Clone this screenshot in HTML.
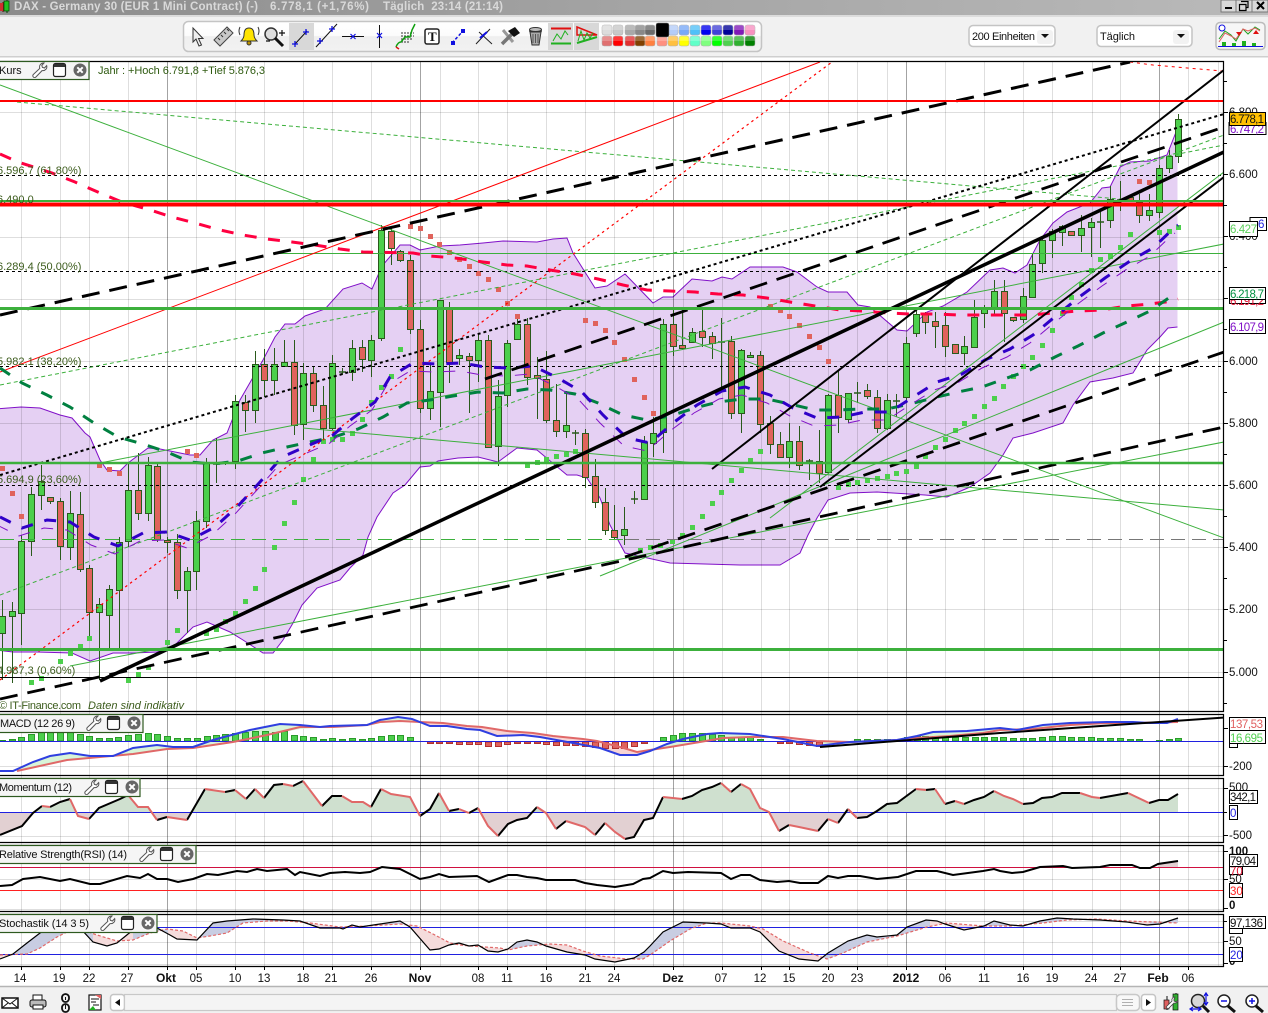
<!DOCTYPE html>
<html>
<head>
<meta charset="utf-8">
<title>DAX - Germany 30</title>
<style>
html,body{margin:0;padding:0;background:#fff;}
body{width:1268px;height:1013px;overflow:hidden;}
svg{display:block;font-family:"Liberation Sans",sans-serif;}
</style>
</head>
<body>
<svg width="1268" height="1013" viewBox="0 0 1268 1013" xmlns="http://www.w3.org/2000/svg">
<defs>
<linearGradient id="tb" x1="0" x2="1" y1="0" y2="0"><stop offset="0" stop-color="#8b8b8b"/><stop offset=".5" stop-color="#a4a4a4"/><stop offset="1" stop-color="#bababa"/></linearGradient>
<linearGradient id="pan" x1="0" x2="0" y1="0" y2="1"><stop offset="0" stop-color="#fff"/><stop offset=".47" stop-color="#fcfcfc"/><stop offset=".5" stop-color="#efefef"/><stop offset="1" stop-color="#f2f2f2"/></linearGradient>
<clipPath id="cm"><rect x="0" y="62" width="1223" height="649"/></clipPath>
<clipPath id="cb"><rect x="-5" y="62" width="1182.5" height="649"/></clipPath>
<clipPath id="cma"><rect x="0" y="715" width="1223" height="60"/></clipPath>
<clipPath id="cmo"><rect x="0" y="779" width="1223" height="63"/></clipPath>
<clipPath id="crs"><rect x="0" y="846" width="1223" height="65"/></clipPath>
<clipPath id="cst"><rect x="0" y="915" width="1223" height="51"/></clipPath>
<clipPath id="above"><rect x="0" y="770" width="1223" height="42"/></clipPath>
<clipPath id="below"><rect x="0" y="812" width="1223" height="30"/></clipPath>
<clipPath id="stb"><rect x="13" y="915" width="80" height="50"/><rect x="133" y="915" width="35" height="50"/><rect x="197" y="915" width="108" height="50"/><rect x="340" y="915" width="65" height="50"/><rect x="512" y="915" width="33" height="50"/><rect x="636" y="915" width="86" height="50"/><rect x="820" y="915" width="110" height="50"/><rect x="985" y="915" width="115" height="50"/><rect x="1150" y="915" width="30" height="50"/></clipPath>
<clipPath id="map"><rect x="415" y="715" width="237" height="50"/><rect x="755" y="715" width="65" height="50"/></clipPath>
<path id="bluema" d="M0 517L22 528 47 520 70 522 94 537 118 546 143 533 167 532 190 540 215 527 238 506 260 482 282 457 305 447 333 435 353 418 375 402 390 377 413 363 437 364 462 363 485 367 510 368 533 366 558 378 582 392 603 415 627 438 650 443 673 423 697 405 722 391 745 387 770 395 793 408 817 418 842 417 865 412 890 412 913 397 937 382 962 374 985 360 1010 349 1033 335 1057 315 1082 295 1105 278 1130 261 1153 248 1175 227 1178 225"/>
<path id="stp" d="M0 959L13 954 27 943 40 933 50 928 80 928 93 942 107 946 117 943 133 930 157 928 170 935 177 939 197 940 213 923 227 921 253 919 283 920 300 921 320 928 340 928 343 929 352 925 360 927 380 924 400 921 410 927 430 950 439 949 449 945 459 943 469 946 478 945 488 951 498 952 508 949 517 942 527 940 537 942 546 946 567 952 585 955 595 959 615 962 634 958 644 952 650 946 663 932 683 922 707 923 721 924 731 928 750 928 760 932 779 951 799 959 818 961 828 953 848 941 867 935 877 937 897 935 907 927 926 920 937 921 945 924 964 930 984 926 994 921 1010 925 1023 926 1040 921 1057 918 1073 919 1100 920 1127 922 1147 925 1160 924 1178 918 L1178 923 1153 922 1127 921 1097 919 1067 920 1043 923 1010 926 983 926 947 923 927 927 897 936 867 942 843 953 827 959 810 953 783 941 763 929 750 926 721 923 707 923 690 929 670 941 650 955 643 959 627 959 600 956 583 951 567 945 550 944 527 946 508 950 500 948 470 946 460 945 450 943 433 934 417 926 400 924 367 926 340 927 310 923 300 922 287 921 267 921 243 923 227 933 210 936 197 938 183 931 167 929 150 933 133 940 117 941 97 935 80 929 67 932 57 937 40 948 27 954 0 955z"/>
<path id="map2" d="M0 771L13 771 33 762 50 756 70 753 90 756 113 756 133 748 157 745 173 747 193 747 213 740 250 730 280 724 300 725 320 727 330 726 367 725 380 720 398 717 412 719 430 726 447 726 467 729 480 730 497 736 523 735 540 737 573 743 600 748 620 755 637 755 650 751 667 744 683 739 707 734 720 733 750 734 783 739 817 746 850 742 897 740 917 736 933 732 967 731 1000 728 1017 730 1043 725 1070 723 1107 722 1133 722 1150 723 1167 723 1178 719 L1178 722 1133 723 1107 723 1070 725 1033 729 1000 730 983 733 950 736 917 738 897 740 850 742 817 741 783 737 750 737 723 738 700 742 670 747 650 750 637 752 620 747 597 741 583 739 553 736 533 733 507 731 482 727 467 726 443 723 420 722 400 721 380 722 367 725 333 727 300 729 267 735 233 742 193 748 167 749 133 754 100 757 67 760 17 771z"/>
<path id="moa" d="M0 812L0 835 22 826 33 813 42 806 50 807 60 802 70 799 78 816 89 819 99 808 120 799 128 795 138 807 148 807 157 820 167 817 187 820 205 789 225 792 235 790 246 799 255 789 264 798 274 785 283 784 293 786 303 781 322 806 332 796 342 796 352 802 363 802 371 807 381 789 391 794 410 797 420 816 430 809 439 793 449 811 459 809 469 813 478 808 488 826 498 836 508 824 517 820 527 818 537 807 546 813 556 829 566 821 585 827 595 835 605 823 615 832 625 839 634 837 644 820 653 818 663 797 673 798 682 799 692 796 702 790 712 787 721 783 731 792 741 784 750 789 760 808 769 812 779 831 789 825 799 827 818 831 828 819 838 823 848 809 857 818 867 817 877 811 887 804 897 803 916 789 926 790 935 789 945 804 955 801 964 804 974 800 984 797 994 791 1004 796 1013 799 1023 804 1033 803 1042 798 1052 797 1062 793 1080 793 1092 797 1100 798 1128 793 1149 803 1159 800 1168 800 1178 794 1178 812z"/>
<g id="ic">
<path d="M14 1.500a4 4 0 0 0-4.200 5.300L3.300 13a1.800 1.800 0 0 0 2.600 2.500l6.200-6.400a4 4 0 0 0 4.600-5l-2.300 2.400-2-.6-.6-2 2.200-2.400z" transform="translate(-10,-8.500)" fill="#fff" stroke="#555" stroke-width="1"/>
<rect x="13.500" y="-6.500" width="12" height="13" rx="2" fill="#fff" stroke="#222" stroke-width="1.200"/>
<rect x="14" y="-6" width="11" height="3" fill="#333"/>
<circle cx="40" cy="0" r="6.500" fill="#666"/>
<path d="M37.300-2.700l5.400 5.400M42.700-2.700l-5.400 5.400" stroke="#fff" stroke-width="2"/>
</g>
</defs>

<rect width="1268" height="1013" fill="#fff"/>
<!-- title bar -->
<rect x="0" y="0" width="1268" height="15" fill="url(#tb)"/>
<path d="M3 2V12" stroke="#600" stroke-width="1"/><rect x="0" y="3" width="3" height="8" fill="#d03030"/>
<path d="M7 0V13" stroke="#040" stroke-width="1"/><rect x="4" y="1" width="5" height="10" fill="#20c020" stroke="#040" stroke-width=".7"/>
<g font-weight="bold" font-size="11.500" fill="#d9d9d9">
<text x="14" y="10" textLength="244" lengthAdjust="spacing">DAX - Germany 30 (EUR 1 Mini Contract) (-)</text>
<text x="270" y="10" textLength="99" lengthAdjust="spacing">6.778,1 (+1,76%)</text>
<text x="383" y="10" textLength="120" lengthAdjust="spacing" xml:space="preserve">Täglich  23:14 (21:14)</text>
</g>
<rect x="1221" y="0" width="15" height="12" fill="#d8d8d8" stroke="#777"/><rect x="1225" y="7" width="7" height="2" fill="#000"/>
<rect x="1236" y="0" width="16" height="12" fill="#d8d8d8" stroke="#777"/><path d="M1241 1.500h7v6h-2M1239.500 4.500h6.500v6h-6.500z" fill="none" stroke="#000" stroke-width="1.200"/>
<rect x="1252" y="0" width="16" height="12" fill="#d8d8d8" stroke="#777"/><path d="M1257 2l7 7M1264 2l-7 7" stroke="#000" stroke-width="2"/>

<!-- toolbar -->
<rect x="0" y="15" width="1268" height="46" fill="#f1f1f1"/>
<rect x="0" y="15" width="1268" height="2" fill="#dcdcdc"/>
<rect x="0" y="56" width="1268" height="1.500" fill="#cfcfcf"/>
<rect x="0" y="57.500" width="1268" height="3.500" fill="#fff"/>
<rect x="183.500" y="21.500" width="578" height="30" rx="5" fill="url(#pan)" stroke="#c4c4c4" stroke-width="1.500"/>
<rect x="289" y="23" width="25" height="27" fill="#d8d8d8"/>
<rect x="548" y="23" width="25" height="27" fill="#d8d8d8"/>
<rect x="574" y="23" width="25" height="27" fill="#d8d8d8"/>
<path d="M193 28v14l3-3 3 7 2.500-1-3-6.500h4.500z" fill="#eee" stroke="#333"/>
<path d="M214 40l13-13 6 6-13 13z" fill="#c8c8c8" stroke="#444"/><path d="M218 38l2 2M221 35l2 2M224 32l2 2M227 29l2 2" stroke="#333"/>
<path d="M249 28c-4 0-5 3-5 7 0 3-2 5-3 6h16c-1-1-3-3-3-6 0-4-1-7-5-7z" fill="#ffe400" stroke="#333"/><circle cx="249" cy="43" r="2" fill="#bb9000" stroke="#333"/>
<path d="M240 27q-2 4 0 8M258 27q2 4 0 8" fill="none" stroke="#333"/>
<circle cx="271" cy="34" r="6" fill="#ddd" stroke="#333" stroke-width="1.500"/><path d="M275 38l8 8" stroke="#111" stroke-width="3"/>
<path d="M279 33h6M282 30v6M266 41h4" stroke="#111" stroke-width="1.200"/>
<path d="M295 44l12-13" stroke="#111"/><path d="M295 41v6M292 44h6M306 29v6M303 32h6" stroke="#1010e0" stroke-width="1.300"/>
<path d="M316 47l21-23" stroke="#111"/><path d="M320 38v6M317 41h6M332 26v6M329 29h6" stroke="#1010e0" stroke-width="1.300"/>
<path d="M342 36.500h22" stroke="#111"/><path d="M350.500 34l5 5M355.500 34l-5 5" stroke="#1010e0" stroke-width="1.200"/>
<path d="M379.500 25v23" stroke="#111"/><path d="M377 33l5 5M382 33l-5 5" stroke="#1010e0" stroke-width="1.200"/>
<path d="M401 33h13M401 36h13M401 39h11M401 42h8" stroke="#333" stroke-dasharray="2 1"/><path d="M396 47q2-5 5-5l4-5h5l2-7 3-6" fill="none" stroke="#10a010" stroke-width="1.500"/><path d="M396 47l3 2" stroke="#e01010" stroke-width="1.500"/>
<rect x="425" y="29" width="14" height="15" rx="2" fill="#fff" stroke="#222" stroke-width="1.500"/><text x="428" y="41" font-size="13" font-weight="bold" font-family="Liberation Serif,serif" fill="#111">T</text>
<path d="M452 43l11-12" stroke="#1010e0" stroke-width="1.500" stroke-dasharray="3 2"/><rect x="451" y="41" width="4" height="4" fill="#1010e0"/><rect x="461" y="29" width="4" height="4" fill="#1010e0"/>
<path d="M476 44l14-15M479 32l13 12" stroke="#222"/><path d="M480 38l7-6" stroke="#1010e0" stroke-width="2"/>
<path d="M503 30l10 12" stroke="#999" stroke-width="3"/><path d="M502 44l10-10" stroke="#777" stroke-width="3.500"/><path d="M508 31l7-4 5 6-6 4z" fill="#111"/>
<path d="M529 31h13M530 32l2 13h7l2-13z" fill="#aaa" stroke="#333"/><ellipse cx="535.500" cy="29.500" rx="6" ry="2" fill="#bbb" stroke="#333"/><path d="M533 34v9M535.500 34v9M538 34v9" stroke="#555"/>
<path d="M551 28.500h20" stroke="#e01010" stroke-width="2"/><path d="M551 43.500h20" stroke="#20b020" stroke-width="2"/><path d="M553 41l4-7 4 5 4-8 3 4" fill="none" stroke="#20b020"/>
<path d="M577 27l20 8-20 0z" fill="none" stroke="#e01010" stroke-width="1.500"/><path d="M577 43l20-6" stroke="#20b020" stroke-width="2"/><path d="M578 41l3-10 3 9 3-7 3 5 3-5" fill="none" stroke="#20b020"/>

<!-- palette -->
<g stroke="#b0b0b0" stroke-width=".5">
<rect x="602" y="25" width="10" height="10" rx="2" fill="#dcdcdc"/><rect x="613" y="25" width="10" height="10" rx="2" fill="#c8c8c8"/><rect x="625" y="25" width="10" height="10" rx="2" fill="#a8a8a8"/><rect x="635" y="25" width="10" height="10" rx="2" fill="#888"/><rect x="645" y="25" width="10" height="10" rx="2" fill="#6a6a6a"/>
<rect x="668" y="25" width="10" height="10" rx="2" fill="#b4ccf8"/><rect x="679" y="25" width="10" height="10" rx="2" fill="#78a8f8"/><rect x="690" y="25" width="10" height="10" rx="2" fill="#50c0f8"/><rect x="701" y="25" width="10" height="10" rx="2" fill="#0000f0"/><rect x="712" y="25" width="10" height="10" rx="2" fill="#4040d8"/><rect x="723" y="25" width="10" height="10" rx="2" fill="#000098"/><rect x="734" y="25" width="10" height="10" rx="2" fill="#8018b8"/><rect x="745" y="25" width="10" height="10" rx="2" fill="#f890c0"/>
<rect x="602" y="36" width="10" height="10" rx="2" fill="#e07070"/><rect x="613" y="36" width="10" height="10" rx="2" fill="#ff0000"/><rect x="625" y="36" width="10" height="10" rx="2" fill="#e03030"/><rect x="635" y="36" width="10" height="10" rx="2" fill="#804000"/><rect x="645" y="36" width="10" height="10" rx="2" fill="#ff8040"/><rect x="657" y="36" width="10" height="10" rx="2" fill="#ff9080"/><rect x="668" y="36" width="10" height="10" rx="2" fill="#ffc040"/><rect x="679" y="36" width="10" height="10" rx="2" fill="#ffff00"/><rect x="690" y="36" width="10" height="10" rx="2" fill="#60ffc8"/><rect x="701" y="36" width="10" height="10" rx="2" fill="#80ff80"/><rect x="712" y="36" width="10" height="10" rx="2" fill="#00ff00"/><rect x="723" y="36" width="10" height="10" rx="2" fill="#50d050"/><rect x="734" y="36" width="10" height="10" rx="2" fill="#30b030"/><rect x="745" y="36" width="10" height="10" rx="2" fill="#008000"/>
</g>
<rect x="602" y="25" width="153" height="5" fill="#fff" opacity=".22"/><rect x="602" y="36" width="153" height="5" fill="#fff" opacity=".22"/>
<rect x="656" y="23" width="13" height="14" rx="2" fill="#000" stroke="#888" stroke-width=".5"/>

<!-- selects -->
<rect x="969" y="25.500" width="86" height="21" rx="4" fill="#fff" stroke="#c4c4c4" stroke-width="1.500"/>
<rect x="1037" y="30" width="16" height="14" rx="3" fill="#f2f2f2"/>
<text x="972" y="40" font-size="11" fill="#111" textLength="63" lengthAdjust="spacing">200 Einheiten</text><path d="M1041 34h8l-4 4z" fill="#111"/>
<rect x="1097" y="25.500" width="95" height="21" rx="4" fill="#fff" stroke="#c4c4c4" stroke-width="1.500"/>
<rect x="1173" y="30" width="16" height="14" rx="3" fill="#f2f2f2"/>
<text x="1100" y="40" font-size="11" fill="#111" textLength="35" lengthAdjust="spacing">Täglich</text><path d="M1177 34h8l-4 4z" fill="#111"/>
<rect x="1216" y="22.500" width="49" height="27" rx="4" fill="#f6f6f6" stroke="#bbb" stroke-width="1.500"/>
<path d="M1219 39l6-8 6 4 5 6 7-12 5 5 7-7 5 3" fill="none" stroke="#20a020"/><path d="M1219 42l6-9 6 3 5 3 7-10 5 2 7-3 5 3" fill="none" stroke="#e06060"/>
<path d="M1218 46.500h45" stroke="#1010e0"/><path d="M1222 42h4v4h-4zM1232 43h4v3h-4zM1242 41h4v5h-4zM1252 43h4v3h-4z" fill="#20b020"/>
<circle cx="1222" cy="28" r="3" fill="#fff" stroke="#1010e0"/><path d="M1236 32l3 4 3-4zM1256 30l-3 4h6z" fill="#e01010"/>

<!-- MAIN CHART -->
<g clip-path="url(#cb)"><path d="M-5 409L21 407 40 408 60 415 72 418 85 433 90 437 100 460 107 470 120 471 128 463 148 448 160 449 190 455 200 455 213 440 227 433 240 400 263 360 275 337 285 324 295 324 305 316 325 309 343 289 362 283 372 289 382 266 400 245 410 245 420 250 440 246 460 245 483 243 503 241 537 242 553 239 567 238 573 253 595 288 607 286 625 274 653 303 663 297 673 297 692 279 712 281 722 277 732 279 750 267 783 267 797 272 817 287 828 292 847 292 858 305 870 307 897 330 907 331 927 312 943 306 967 292 990 270 1003 268 1015 273 1027 265 1040 240 1053 223 1067 212 1090 203 1102 188 1110 187 1120 167 1130 162 1150 161 1167 155 1178 127 1180 127 1180 327 1178 327 1168 328 1160 337 1147 350 1133 373 1113 378 1090 382 1073 405 1063 423 1033 433 1013 438 1003 455 990 473 970 487 947 497 925 495 877 492 850 493 828 500 817 518 808 535 800 553 780 565 740 565 670 563 625 553 610 525 600 498 587 478 577 475 567 475 537 450 517 448 498 462 478 457 458 458 438 461 430 466 420 467 405 485 393 493 377 517 368 537 363 555 350 568 340 580 317 588 302 605 293 623 283 640 273 653 263 653 243 640 230 632 207 622 193 627 180 640 172 648 157 652 133 653 113 653 90 661 72 653 37 652 13 652 -5 650z" fill="#e5d0f3" stroke="#8010c8" stroke-width="1"/></g>

<!-- grids -->
<g stroke="#000" stroke-opacity=".13" stroke-width="1" fill="none">
<path id="vg" d="M21.500 62V966M60.500 62V966M89.500 62V966M128.500 62V966M196.500 62V966M235.500 62V966M264.500 62V966M303.500 62V966M332.500 62V966M371.500 62V966M410.500 62V966M440.500 62V966M478.500 62V966M507.500 62V966M546.500 62V966M585.500 62V966M614.500 62V966M653.500 62V966M683.500 62V966M722.500 62V966M761.500 62V966M789.500 62V966M828.500 62V966M857.500 62V966M887.500 62V966M945.500 62V966M984.500 62V966M1023.500 62V966M1052.500 62V966M1092.500 62V966M1120.500 62V966M1188.500 62V966M1218.500 62V966"/>
<path d="M0 112.500H1223M0 237.500H1223M0 299.500H1223M0 361.500H1223M0 423.500H1223M0 547.500H1223M0 609.500H1223M0 672.500H1223M0 766.500H1223M0 788.500H1223M0 836.500H1223M0 851.500H1223M0 879.500H1223M0 909.500H1223M0 921.500H1223M0 942.500H1223M0 964.500H1223"/>
</g>
<path d="M167.500 62V966M420.500 62V966M673.500 62V966M906.500 62V966M1159.500 62V966" stroke="#000" stroke-opacity=".36" fill="none"/>

<g clip-path="url(#cm)">
<!-- wicks -->
<path fill="none" stroke="#2a5a1c" stroke-width="1" d="M2.500 600V680M12.500 602V683M21.500 535V645M31.500 487V556M41.500 465V510M50.500 497V504M60.500 498V560M70.500 491V560M80.500 492V572M89.500 565V640M99.500 598V680M109.500 585V650M119.500 537V650M128.500 463V547M138.500 453V520M148.500 457V521M157.500 463V542M167.500 537V553M177.500 534V599M187.500 567V633M196.500 511V590M206.500 458V528M216.500 438V483M225.500 463V465M235.500 395V469M245.500 395V432M255.500 351V423M264.500 349V397M274.500 348V395M284.500 340V367M294.500 340V435M303.500 363V440M313.500 367V412M323.500 386V440M332.500 355V430M342.500 368V375M352.500 340V381M362.500 340V372M371.500 335V377M381.500 225V341M391.500 228V265M400.500 250V262M410.500 255V334M420.500 320V413M430.500 363V420M440.500 300V427M449.500 302V383M459.500 349V365M469.500 353V413M478.500 335V382M488.500 335V448M498.500 380V466M507.500 340V407M517.500 318V340M527.500 318V385M537.500 357V419M546.500 351V423M556.500 384V437M566.500 391V438M575.500 430V445M585.500 429V488M595.500 459V508M605.500 488V535M614.500 505V540M624.500 507V545M634.500 491V504M644.500 436V500M653.500 417V457M663.500 319V453M673.500 310V356M682.500 310V350M692.500 328V342M702.500 308V347M712.500 332V359M721.500 318V387M731.500 336V419M741.500 349V433M750.500 352V358M760.500 351V433M770.500 416V454M780.500 432V458M789.500 423V468M799.500 426V470M809.500 459V480M819.500 430V483M828.500 394V472M838.500 371V433M848.500 393V423M857.500 382V403M867.500 384V399M877.500 390V433M887.500 394V430M896.500 394V417M906.500 337V403M916.500 309V337M925.500 312V334M935.500 312V348M945.500 312V357M955.500 344V354M964.500 336V365M974.500 300V348M984.500 305V328M994.500 280V315M1004.500 280V342M1013.500 317V322M1023.500 288V323M1032.500 254V298M1042.500 237V273M1052.500 229V258M1062.500 225V246M1071.500 231V235M1081.500 215V252M1091.500 218V257M1100.500 212V248M1110.500 186V228M1120.500 181V211M1130.500 197V200M1139.500 194V223M1149.500 194V221M1159.500 165V218M1169.500 150V173M1178.500 114V163"/>
<!-- doji -->
<path fill="none" stroke="#2a5a1c" stroke-width="1.500" d="M213 464h7M222 463h7M339 372h7M572 433h7M631 499h7M718 342h7M806 461h7M854 393h7M893 401h7M1097 222h7M1117 200h7"/>
<!-- green bodies -->
<path fill="#4ccf4c" stroke="#2a5a1c" stroke-width="1" d="M-.5 616.500h6V633.500h-6zM9.500 611.500h6V616.500h-6zM18.500 541.500h6V613.500h-6zM28.500 494.500h6V541.500h-6zM38.500 481.500h6V495.500h-6zM67.500 513.500h6V547.500h-6zM96.500 604.500h6V612.500h-6zM106.500 589.500h6V615.500h-6zM116.500 542.500h6V590.500h-6zM125.500 490.500h6V541.500h-6zM145.500 465.500h6V513.500h-6zM184.500 571.500h6V590.500h-6zM193.500 521.500h6V571.500h-6zM203.500 463.500h6V521.500h-6zM232.500 401.500h6V461.500h-6zM252.500 364.500h6V410.500h-6zM271.500 364.500h6V380.500h-6zM281.500 362.500h6V366.500h-6zM300.500 373.500h6V424.500h-6zM329.500 363.500h6V428.500h-6zM349.500 348.500h6V372.500h-6zM368.500 340.500h6V360.500h-6zM378.500 230.500h6V338.500h-6zM427.500 391.500h6V408.500h-6zM437.500 300.500h6V392.500h-6zM456.500 355.500h6V358.500h-6zM475.500 340.500h6V360.500h-6zM495.500 396.500h6V446.500h-6zM504.500 343.500h6V395.500h-6zM514.500 324.500h6V339.500h-6zM563.500 425.500h6V431.500h-6zM621.500 529.500h6V535.500h-6zM641.500 442.500h6V499.500h-6zM650.500 433.500h6V443.500h-6zM660.500 324.500h6V432.500h-6zM689.500 332.500h6V342.500h-6zM738.500 350.500h6V413.500h-6zM747.500 355.500h6V357.500h-6zM786.500 441.500h6V457.500h-6zM825.500 395.500h6V472.500h-6zM845.500 393.500h6V419.500h-6zM884.500 400.500h6V428.500h-6zM903.500 343.500h6V397.500h-6zM913.500 314.500h6V333.500h-6zM961.500 346.500h6V353.500h-6zM971.500 317.500h6V347.500h-6zM981.500 307.500h6V313.500h-6zM991.500 291.500h6V307.500h-6zM1020.500 296.500h6V319.500h-6zM1029.500 264.500h6V297.500h-6zM1039.500 240.500h6V263.500h-6zM1049.500 231.500h6V240.500h-6zM1059.500 226.500h6V232.500h-6zM1078.500 228.500h6V235.500h-6zM1088.500 222.500h6V227.500h-6zM1107.500 199.500h6V220.500h-6zM1146.500 210.500h6V215.500h-6zM1156.500 168.500h6V212.500h-6zM1166.500 156.500h6V168.500h-6zM1175.500 119.500h6V156.500h-6z"/>
<!-- red bodies -->
<path fill="#e0635c" stroke="#2a5a1c" stroke-width="1" d="M47.500 497.500h6V501.500h-6zM57.500 501.500h6V546.500h-6zM77.500 514.500h6V569.500h-6zM86.500 568.500h6V612.500h-6zM135.500 490.500h6V513.500h-6zM154.500 466.500h6V539.500h-6zM164.500 540.500h6V542.500h-6zM174.500 542.500h6V590.500h-6zM242.500 402.500h6V410.500h-6zM261.500 364.500h6V380.500h-6zM291.500 362.500h6V425.500h-6zM310.500 373.500h6V405.500h-6zM320.500 405.500h6V428.500h-6zM359.500 347.500h6V359.500h-6zM388.500 231.500h6V248.500h-6zM397.500 251.500h6V260.500h-6zM407.500 260.500h6V329.500h-6zM417.500 329.500h6V408.500h-6zM446.500 308.500h6V362.500h-6zM466.500 356.500h6V360.500h-6zM485.500 340.500h6V447.500h-6zM524.500 324.500h6V377.500h-6zM534.500 375.500h6V378.500h-6zM543.500 379.500h6V420.500h-6zM553.500 420.500h6V431.500h-6zM582.500 433.500h6V477.500h-6zM592.500 476.500h6V502.500h-6zM602.500 502.500h6V530.500h-6zM611.500 530.500h6V537.500h-6zM670.500 324.500h6V346.500h-6zM679.500 345.500h6V348.500h-6zM699.500 331.500h6V337.500h-6zM709.500 336.500h6V343.500h-6zM728.500 341.500h6V413.500h-6zM757.500 355.500h6V424.500h-6zM767.500 423.500h6V444.500h-6zM777.500 444.500h6V457.500h-6zM796.500 441.500h6V465.500h-6zM816.500 461.500h6V473.500h-6zM835.500 395.500h6V417.500h-6zM864.500 390.500h6V396.500h-6zM874.500 397.500h6V428.500h-6zM922.500 314.500h6V322.500h-6zM932.500 321.500h6V326.500h-6zM942.500 325.500h6V346.500h-6zM952.500 344.500h6V353.500h-6zM1001.500 291.500h6V313.500h-6zM1010.500 317.500h6V320.500h-6zM1068.500 231.500h6V235.500h-6zM1127.500 197.500h6V200.500h-6zM1136.500 202.500h6V215.500h-6z"/>

<!-- SAR green -->
<path fill="#4ccf4c" d="M29 680h5v5h-5zM39 676h5v5h-5zM58 659h5v5h-5zM68 651h5v5h-5zM78 644h5v5h-5zM87 636h5v5h-5zM126 678h5v5h-5zM136 672h5v5h-5zM146 665h5v5h-5zM165 640h5v5h-5zM175 628h5v5h-5zM204 631h5v5h-5zM214 627h5v5h-5zM223 619h5v5h-5zM233 611h5v5h-5zM243 599h5v5h-5zM253 586h5v5h-5zM262 567h5v5h-5zM272 545h5v5h-5zM282 521h5v5h-5zM292 500h5v5h-5zM301 477h5v5h-5zM311 457h5v5h-5zM321 439h5v5h-5zM330 437h5v5h-5zM340 437h5v5h-5zM350 431h5v5h-5zM360 417h5v5h-5zM369 400h5v5h-5zM379 385h5v5h-5zM389 374h5v5h-5zM398 347h5v5h-5zM525 463h5v5h-5zM535 460h5v5h-5zM544 457h5v5h-5zM554 454h5v5h-5zM564 452h5v5h-5zM573 449h5v5h-5zM638 548h5v5h-5zM648 545h5v5h-5zM658 543h5v5h-5zM670 539h5v5h-5zM680 533h5v5h-5zM690 525h5v5h-5zM700 514h5v5h-5zM710 501h5v5h-5zM719 490h5v5h-5zM729 478h5v5h-5zM739 468h5v5h-5zM748 458h5v5h-5zM758 449h5v5h-5zM836 485h5v5h-5zM846 482h5v5h-5zM855 480h5v5h-5zM865 478h5v5h-5zM875 476h5v5h-5zM885 474h5v5h-5zM894 471h5v5h-5zM904 469h5v5h-5zM914 464h5v5h-5zM923 454h5v5h-5zM933 445h5v5h-5zM943 437h5v5h-5zM953 428h5v5h-5zM962 421h5v5h-5zM972 414h5v5h-5zM982 404h5v5h-5zM992 396h5v5h-5zM1001 384h5v5h-5zM1011 374h5v5h-5zM1021 364h5v5h-5zM1030 355h5v5h-5zM1040 343h5v5h-5zM1050 328h5v5h-5zM1060 311h5v5h-5zM1069 295h5v5h-5zM1079 282h5v5h-5zM1089 268h5v5h-5zM1098 257h5v5h-5zM1108 254h5v5h-5zM1118 245h5v5h-5zM1128 232h5v5h-5zM1157 230h5v5h-5zM1167 229h5v5h-5zM1176 225h5v5h-5z"/>
<!-- SAR red -->
<path fill="#e0635c" d="M0 466h5v5h-5zM10 491h5v5h-5zM19 514h5v5h-5zM97 463h5v5h-5zM107 467h5v5h-5zM117 471h5v5h-5zM185 449h5v5h-5zM194 453h5v5h-5zM408 224h5v5h-5zM418 226h5v5h-5zM428 234h5v5h-5zM437 242h5v5h-5zM447 250h5v5h-5zM457 257h5v5h-5zM467 264h5v5h-5zM476 271h5v5h-5zM486 277h5v5h-5zM496 287h5v5h-5zM505 301h5v5h-5zM515 314h5v5h-5zM583 318h5v5h-5zM593 321h5v5h-5zM603 328h5v5h-5zM612 340h5v5h-5zM622 357h5v5h-5zM632 377h5v5h-5zM642 395h5v5h-5zM651 411h5v5h-5zM768 304h5v5h-5zM778 308h5v5h-5zM787 314h5v5h-5zM797 323h5v5h-5zM807 334h5v5h-5zM817 345h5v5h-5zM826 359h5v5h-5zM1137 179h5v5h-5zM1147 180h5v5h-5z"/>

<!-- fib + horizontals -->
<path fill="none" stroke="#000" stroke-width="1" stroke-dasharray="3 3" d="M0 175.500H1223M0 271.500H1223M0 366.500H1223M0 485.500H1223"/>
<path d="M0 677.500H1223" stroke="#000" stroke-width="1"/>
<path d="M0 539.500H625" stroke="#3cb03c" stroke-width="1" stroke-dasharray="14 7"/><path d="M625 539.500H1223" stroke="#777" stroke-width="1" stroke-dasharray="14 7"/>
<path d="M273 253.500H1223" stroke="#3cb03c"/>

<!-- thin green trends -->
<g fill="none" stroke="#3cb03c" stroke-width="1">
<path d="M0 85L1224 538"/>
<path d="M100 463L1224 244"/>
<path d="M303 428L1224 510"/>
<path d="M70 666L1224 442"/>
<path d="M600 576L1224 322"/>
<path d="M770 518L1224 172"/>
<path d="M17 102L1130 200" stroke-dasharray="4 3"/>
<path d="M0 385L1224 145" stroke-dasharray="4 3"/>
<path d="M0 595L1224 135" stroke-dasharray="4 3"/>
</g>

<!-- red trends -->
<path d="M0 372L820 62" stroke="#ff0000" fill="none"/>
<path d="M0 680L832 62" stroke="#ff0000" fill="none" stroke-dasharray="2.500 3.500" stroke-width="1.200"/>
<path d="M1130 62L1153 65 1222 71" stroke="#ff0000" fill="none" stroke-dasharray="3 4"/>

<!-- MA -->
<path fill="none" stroke="#ff0040" stroke-width="3" stroke-dasharray="12 11.500" d="M0 154L18 162 52 173 75 182 100 193 122 202 147 209 172 217 195 223 220 230 243 235 267 239 292 242 315 245 340 249 363 252 413 253 430 256 455 258 483 262 507 265 527 266 550 270 575 274 598 279 623 285 647 290 670 291 695 292 718 294 743 295 767 298 790 302 815 306 840 310 863 311 888 313 910 314 933 314 958 315 982 315 1007 315 1030 315 1053 313 1078 311 1102 310 1127 306 1150 304 1173 301 1178 299"/>
<path fill="none" stroke="#008040" stroke-width="3" stroke-dasharray="12 12" d="M0 368L22 383 47 395 70 407 94 423 118 437 143 444 167 452 190 462 213 464 238 461 262 453 287 447 310 442 334 437 358 429 383 417 407 403 430 400 453 396 478 392 503 393 527 389 550 390 575 394 598 403 623 415 647 420 670 416 695 408 718 402 743 399 767 399 790 404 815 410 838 410 863 409 887 409 910 404 933 398 958 392 982 387 1007 378 1030 370 1055 357 1078 346 1103 333 1127 322 1150 311 1173 295 1178 292"/>
<use href="#bluema" fill="none" stroke="#8010c8" stroke-width="1" stroke-dasharray="12 12" transform="translate(-3,8)"/>
<use href="#bluema" fill="none" stroke="#3000c8" stroke-width="3" stroke-dasharray="12 12"/>

<!-- black trends -->
<g fill="none" stroke="#000">
<path d="M100 681L1224 152" stroke-width="3.500"/>
<path d="M712 469L1224 70" stroke-width="2"/>
<path d="M820 487L1224 177" stroke-width="2"/>
<path d="M0 699L1224 427" stroke-width="2.800" stroke-dasharray="18 10"/>
<path d="M625 557L1224 352" stroke-width="2.800" stroke-dasharray="18 10"/>
<path d="M485 379L1224 127" stroke-width="2.800" stroke-dasharray="18 10"/>
<path d="M0 315L1130 62" stroke-width="3" stroke-dasharray="18 10"/>
<path d="M0 475L1224 114" stroke-width="2" stroke-dasharray="3 3"/>
</g>
<path d="M0 101H1223" stroke="#ff0000" stroke-width="2"/>
<path d="M0 204.500H1223" stroke="#ff0000" stroke-width="4"/>
<path d="M0 201H1223" stroke="#3cb03c" stroke-width="2"/>
<path d="M0 308.500H1223" stroke="#3cb03c" stroke-width="3"/>
<path d="M0 463H1223" stroke="#3cb03c" stroke-width="2.500"/>
<path d="M0 649.500H1223" stroke="#3cb03c" stroke-width="3"/>

<g font-size="11" fill="#3c5c1c">
<text x="-3" y="174">6.596,7 (61,80%)</text>
<text x="-3" y="203">6.490,0</text>
<text x="-3" y="270">6.289,4 (50,00%)</text>
<text x="-3" y="365">5.982,1 (38,20%)</text>
<text x="-3" y="483">5.694,9 (23,60%)</text>
<text x="-3" y="674">4.987,3 (0,60%)</text>
<text x="-1" y="709" textLength="82" lengthAdjust="spacing">© IT-Finance.com</text>
<text x="88" y="709" font-style="italic" textLength="96" lengthAdjust="spacing">Daten sind indikativ</text>
</g>
<text x="98" y="74" font-size="11" fill="#2e5a10" textLength="167" lengthAdjust="spacing">Jahr : +Hoch 6.791,8 +Tief 5.876,3</text>
</g>

<!-- MACD -->
<g clip-path="url(#cma)">
<use href="#map2" fill="#d8f4d8"/>
<use href="#map2" fill="#f7d4d4" clip-path="url(#map)"/>
<path fill="#4ccf4c" stroke="#2a9a2a" stroke-width="1" d="M-.5 740.500h6V741h-6zM9.500 739.500h6V741h-6zM18.500 737.500h6V741h-6zM28.500 734.500h6V741h-6zM38.500 732.500h6V741h-6zM47.500 732.500h6V741h-6zM57.500 732.500h6V741h-6zM67.500 732.500h6V741h-6zM77.500 734.500h6V741h-6zM86.500 736.500h6V741h-6zM96.500 738.500h6V741h-6zM106.500 738.500h6V741h-6zM115.500 737.500h6V741h-6zM125.500 735.500h6V741h-6zM135.500 734.500h6V741h-6zM145.500 733.500h6V741h-6zM154.500 734.500h6V741h-6zM164.500 736.500h6V741h-6zM174.500 738.500h6V741h-6zM184.500 738.500h6V741h-6zM194.500 738.500h6V741h-6zM204.500 736.500h6V741h-6zM213.500 735.500h6V741h-6zM222.500 734.500h6V741h-6zM232.500 733.500h6V741h-6zM242.500 732.500h6V741h-6zM252.500 731.500h6V741h-6zM262.500 731.500h6V741h-6zM272.500 732.500h6V741h-6zM281.500 731.500h6V741h-6zM291.500 735.500h6V741h-6zM300.500 736.500h6V741h-6zM310.500 737.500h6V741h-6zM320.500 739.500h6V741h-6zM329.500 738.500h6V741h-6zM339.500 739.500h6V741h-6zM349.500 738.500h6V741h-6zM359.500 739.500h6V741h-6zM368.500 738.500h6V741h-6zM378.500 736.500h6V741h-6zM388.500 735.500h6V741h-6zM397.500 735.500h6V741h-6zM407.500 737.500h6V741h-6zM660.500 737.500h6V741h-6zM670.500 735.500h6V741h-6zM679.500 733.500h6V741h-6zM689.500 733.500h6V741h-6zM699.500 733.500h6V741h-6zM709.500 734.500h6V741h-6zM718.500 735.500h6V741h-6zM728.500 737.500h6V741h-6zM738.500 737.500h6V741h-6zM747.500 737.500h6V741h-6zM757.500 739.500h6V741h-6zM854.500 739.500h6V741h-6zM864.500 739.500h6V741h-6zM874.500 739.500h6V741h-6zM884.500 739.500h6V741h-6zM904.500 737.500h6V741h-6zM914.500 736.500h6V741h-6zM922.500 736.500h6V741h-6zM932.500 736.500h6V741h-6zM942.500 736.500h6V741h-6zM952.500 737.500h6V741h-6zM962.500 737.500h6V741h-6zM972.500 737.500h6V741h-6zM981.500 737.500h6V741h-6zM991.500 737.500h6V741h-6zM1000.500 737.500h6V741h-6zM1010.500 738.500h6V741h-6zM1020.500 738.500h6V741h-6zM1029.500 738.500h6V741h-6zM1039.500 737.500h6V741h-6zM1049.500 736.500h6V741h-6zM1059.500 736.500h6V741h-6zM1068.500 737.500h6V741h-6zM1078.500 737.500h6V741h-6zM1088.500 737.500h6V741h-6zM1097.500 738.500h6V741h-6zM1107.500 738.500h6V741h-6zM1117.500 738.500h6V741h-6zM1127.500 739.500h6V741h-6zM1136.500 739.500h6V741h-6zM1156.500 740.500h6V741h-6zM1166.500 739.500h6V741h-6zM1175.500 738.500h6V741h-6z"/>
<path fill="#e0635c" stroke="#b03030" stroke-width="1" d="M427.500 742h6V743.500h-6zM436.500 742h6V743.500h-6zM446.500 742h6V743.500h-6zM456.500 742h6V744.500h-6zM466.500 742h6V744.500h-6zM475.500 742h6V744.500h-6zM485.500 742h6V746.500h-6zM495.500 742h6V746.500h-6zM504.500 742h6V744.500h-6zM514.500 742h6V743.500h-6zM524.500 742h6V743.500h-6zM534.500 742h6V743.500h-6zM543.500 742h6V744.500h-6zM553.500 742h6V745.500h-6zM563.500 742h6V745.500h-6zM572.500 742h6V745.500h-6zM582.500 742h6V746.500h-6zM592.500 742h6V747.500h-6zM602.500 742h6V748.500h-6zM612.500 742h6V748.500h-6zM621.500 742h6V748.500h-6zM631.500 742h6V746.500h-6zM641.500 742h6V743.500h-6zM777.500 742h6V743.500h-6zM786.500 742h6V743.500h-6zM796.500 742h6V744.500h-6zM806.500 742h6V745.500h-6zM816.500 742h6V746.500h-6z"/>
<path d="M0 741.500H1223" stroke="#2020e0" stroke-width="1"/>
<path fill="none" stroke="#e06868" stroke-width="2" d="M17 771L67 760 100 757 133 754 167 749 193 748 233 742 267 735 300 727 333 727 367 725 380 722 400 721 420 722 443 723 467 726 482 727 507 731 533 733 553 736 583 739 597 741 620 747 637 752 650 750 670 747 700 742 723 738 750 737 783 737 817 741 850 742 897 740 917 738 950 736 983 733 1000 730 1033 729 1070 725 1107 723 1133 723 1178 722"/>
<path fill="none" stroke="#2f3fe0" stroke-width="2" d="M0 771L13 771 33 762 50 756 70 753 90 756 113 756 133 748 157 745 173 747 193 747 213 740 250 730 280 724 300 725 320 727 330 726 367 725 380 720 398 717 412 719 430 726 447 726 467 729 480 730 497 736 523 735 540 737 573 743 600 748 620 755 637 755 650 751 667 744 683 739 707 734 720 733 750 734 783 739 817 746 850 742 897 740 917 736 933 732 967 731 1000 728 1017 730 1043 725 1070 723 1107 722 1133 722 1150 723 1167 723 1178 719"/>
<path d="M820 747L1000 733 1224 717.500" stroke="#000" stroke-width="2" fill="none"/>
</g>

<!-- Momentum -->
<g clip-path="url(#cmo)">
<use href="#moa" fill="#cfe0cf" clip-path="url(#above)"/>
<use href="#moa" fill="#e2d0d2" clip-path="url(#below)"/>
<path d="M0 812.500H1223" stroke="#2020e0"/>
<path fill="none" stroke="#000" stroke-width="2" d="M0 835L22 826 33 813 42 806M50 807L60 802 70 799M89 819L99 808 120 799 128 795M157 820L167 817M187 820L205 789M225 792L235 790M246 799L255 789M264 798L274 785 283 784M293 786L303 781M322 806L332 796 342 796M371 807L381 789M420 816L430 809 439 793M449 811L459 809M469 813L478 808M498 836L508 824 517 820 527 818 537 807M556 829L566 821M595 835L605 823M625 839L634 837 644 820 653 818 663 797M682 799L692 796 702 790 712 787 721 783M731 792L741 784M779 831L789 825M818 831L828 819M838 823L848 809M857 818L867 817 877 811 887 804 897 803 916 789M926 790L935 789M945 804L955 801M964 804L974 800 984 797 994 791M1023 804L1033 803 1042 798 1052 797 1062 793 1080 793M1100 798L1128 793M1149 803L1159 800 1168 800 1178 794"/>
<path fill="none" stroke="#e06868" stroke-width="2" d="M42 806L50 807M70 799L78 816 89 819M128 795L138 807 148 807 157 820M167 817L187 820M205 789L225 792M235 790L246 799M255 789L264 798M283 784L293 786M303 781L322 806M342 796L352 802 363 802 371 807M381 789L391 794 410 797 420 816M439 793L449 811M459 809L469 813M478 808L488 826 498 836M537 807L546 813 556 829M566 821L585 827 595 835M605 823L615 832 625 839M663 797L673 798 682 799M721 783L731 792M741 784L750 789 760 808 769 812 779 831M789 825L799 827 818 831M828 819L838 823M848 809L857 818M916 789L926 790M935 789L945 804M955 801L964 804M994 791L1004 796 1013 799 1023 804M1080 793L1092 797 1100 798M1128 793L1149 803"/>
</g>

<!-- RSI -->
<g clip-path="url(#crs)">
<path d="M1158 864L1178 861V867H1158z" fill="#e2d0d2"/>
<path d="M0 867.500H1223" stroke="#d01040"/><path d="M0 890.500H1223" stroke="#ff2020"/>
<path fill="none" stroke="#000" stroke-width="2" d="M0 886L12 885 23 879 40 877 60 881 70 879 90 884 100 884 127 876 140 878 148 874 157 879 167 879 178 882 193 879 207 874 218 875 237 871 247 872 257 869 267 871 287 869 295 875 300 872 320 876 330 873 345 872 360 873 370 872 382 867 400 869 420 879 430 877 439 874 449 877 477 876 489 882 508 875 517 875 527 877 537 878 546 880 575 880 585 883 597 885 615 887 633 884 643 879 650 878 663 871 673 873 688 872 721 873 731 879 741 875 750 875 760 880 777 882 789 881 800 883 818 883 828 876 838 878 848 876 860 876 877 879 898 877 916 871 937 871 953 875 983 871 994 869 1000 871 1012 873 1023 872 1040 867 1063 866 1072 868 1100 867 1110 865 1132 865 1140 868 1150 868 1158 864 1178 861"/>
</g>

<!-- Stochastik -->
<g clip-path="url(#cst)">
<use href="#stp" fill="#f5dcdc"/>
<use href="#stp" fill="#c8cde2" clip-path="url(#stb)"/>
<path d="M0 927.500H1223M0 954.500H1223" stroke="#2020e0"/>
<path fill="none" stroke="#e06868" stroke-width="1.200" stroke-dasharray="3 2" d="M0 955L27 954 40 948 57 937 67 932 80 929 97 935 117 941 133 940 150 933 167 929 183 931 197 938 210 936 227 933 243 923 267 921 287 921 300 922 310 923 340 927 367 926 400 924 417 926 433 934 450 943 460 945 470 946 500 948 508 950 527 946 550 944 567 945 583 951 600 956 627 959 643 959 650 955 670 941 690 929 707 923 721 923 750 926 763 929 783 941 810 953 827 959 843 953 867 942 897 936 927 927 947 923 983 926 1010 926 1043 923 1067 920 1097 919 1127 921 1153 922 1178 923"/>
<path fill="none" stroke="#000" stroke-width="1.200" d="M0 959L13 954 27 943 40 933 50 928 80 928 93 942 107 946 117 943 133 930 157 928 170 935 177 939 197 940 213 923 227 921 253 919 283 920 300 921 320 928 340 928 343 929 352 925 360 927 380 924 400 921 410 927 430 950 439 949 449 945 459 943 469 946 478 945 488 951 498 952 508 949 517 942 527 940 537 942 546 946 567 952 585 955 595 959 615 962 634 958 644 952 650 946 663 932 683 922 707 923 721 924 731 928 750 928 760 932 779 951 799 959 818 961 828 953 848 941 867 935 877 937 897 935 907 927 926 920 937 921 945 924 964 930 984 926 994 921 1010 925 1023 926 1040 921 1057 918 1073 919 1100 920 1127 922 1147 925 1160 924 1178 918"/>
</g>

<!-- panel frames -->
<path fill="none" stroke="#000" stroke-width="1.200" d="M0 61.500H1223.500V711.500H0M0 714.500H1223.500V775.500H0M0 778.500H1223.500V842.500H0M0 845.500H1223.500V911.500H0M0 914.500H1223.500V966.500H0"/>

<!-- legends -->
<g>
<rect x="-2" y="61.500" width="91" height="18" fill="#f5f5f5" stroke="#2e5a20" stroke-width="1.200"/>
<text x="-1" y="74" font-size="11" fill="#111">Kurs</text>
<use href="#ic" transform="translate(40,70)"/>
<rect x="-2" y="714.500" width="145" height="18" fill="#f5f5f5" stroke="#2e5a20" stroke-width="1.200"/>
<text x="0" y="727" font-size="11" fill="#111" textLength="75" lengthAdjust="spacing">MACD (12 26 9)</text>
<use href="#ic" transform="translate(94,723)"/>
<rect x="-2" y="778.500" width="142" height="18" fill="#f5f5f5" stroke="#2e5a20" stroke-width="1.200"/>
<text x="-1" y="791" font-size="11" fill="#111" textLength="73" lengthAdjust="spacing">Momentum (12)</text>
<use href="#ic" transform="translate(92,787)"/>
<rect x="-2" y="845.500" width="198" height="18" fill="#f5f5f5" stroke="#2e5a20" stroke-width="1.200"/>
<text x="-1" y="858" font-size="11" fill="#111" textLength="128" lengthAdjust="spacing">Relative Strength(RSI) (14)</text>
<use href="#ic" transform="translate(147,854)"/>
<rect x="-2" y="914.500" width="159" height="18" fill="#f5f5f5" stroke="#2e5a20" stroke-width="1.200"/>
<text x="-1" y="927" font-size="11" fill="#111" textLength="90" lengthAdjust="spacing">Stochastik (14 3 5)</text>
<use href="#ic" transform="translate(108,923)"/>
</g>

<!-- right axis ticks -->
<path fill="none" stroke="#000" d="M1224 112.500h4M1224 143.500h3M1224 174.500h4M1224 205.500h3M1224 236.500h4M1224 267.500h3M1224 298.500h4M1224 329.500h3M1224 361.500h4M1224 392.500h3M1224 423.500h4M1224 454.500h3M1224 485.500h4M1224 516.500h3M1224 547.500h4M1224 578.500h3M1224 609.500h4M1224 640.500h3M1224 672.500h4M1224 703.500h3M1224 81.500h3M1224 728.500h4M1224 766.500h4M1224 788.500h4M1224 812.500h3M1224 835.500h4M1224 851.500h4M1224 879.500h4M1224 908.500h4M1224 921.500h3M1224 941.500h4M1224 963.500h4"/>
<g font-size="11.500" fill="#111">
<text x="1229" y="116">6.800</text>
<text x="1229" y="178">6.600</text>
<text x="1229" y="240">6.400</text>
<text x="1229" y="365">6.000</text>
<text x="1229" y="427">5.800</text>
<text x="1229" y="489">5.600</text>
<text x="1229" y="551">5.400</text>
<text x="1229" y="613">5.200</text>
<text x="1229" y="676">5.000</text>
<text x="1229" y="770">-200</text>
<text x="1229" y="791">500</text>
<text x="1229" y="839">-500</text>
<text x="1229" y="855" font-weight="bold">100</text>
<text x="1229" y="883">50</text>
<text x="1229" y="909" font-weight="bold">0</text>
<text x="1229" y="945">50</text>
<text x="1229" y="965" font-weight="bold">0</text>
</g>
<!-- boxes -->
<g font-size="11.500" stroke-width="1">
<rect x="1229" y="122.500" width="37" height="12" fill="#fff" stroke="#000"/><text x="1230" y="133" fill="#8010c8" textLength="34">6.747,2</text>
<rect x="1229.500" y="112.500" width="36" height="13" fill="#ffc000" stroke="#000"/><text x="1230" y="123" fill="#111" textLength="34">6.778,1</text>
<rect x="1250" y="217.500" width="16.500" height="13" fill="#fff" stroke="#000"/><text x="1258" y="228" fill="#2020e0">6</text>
<rect x="1229.500" y="221.500" width="28" height="15" fill="#fff" stroke="#000"/><text x="1230" y="233" fill="#5cd05c" textLength="27">6.427</text>
<rect x="1229.500" y="296.500" width="36" height="7" fill="#fff" stroke="#000"/><text x="1230" y="305" fill="#e01030" textLength="34">6.191,2</text>
<rect x="1229.500" y="287.500" width="36" height="12" fill="#fff" stroke="#000"/><text x="1230" y="298" fill="#009040" textLength="34">6.218,7</text>
<rect x="1229.500" y="319.500" width="36" height="14" fill="#fff" stroke="#000"/><text x="1230" y="331" fill="#8010c8" textLength="34">6.107,9</text>
<rect x="1229.500" y="742.500" width="8" height="5" fill="#fff" stroke="#000"/>
<rect x="1229.500" y="717.500" width="36" height="13" fill="#fff" stroke="#000"/><text x="1230" y="728" fill="#e06060" textLength="33">137,53</text>
<rect x="1229.500" y="730.500" width="36" height="13" fill="#fff" stroke="#000"/><text x="1230" y="742" fill="#50d050" textLength="33">16,695</text>
<rect x="1229.500" y="790.500" width="28" height="13" fill="#fff" stroke="#000"/><text x="1230" y="801" fill="#111" textLength="26">342,1</text>
<rect x="1229.500" y="805.500" width="8" height="14" fill="#fff" stroke="#000"/><text x="1230" y="817" fill="#2020e0">0</text>
<rect x="1229.500" y="865.500" width="13" height="9" fill="#fff" stroke="#000"/><text x="1230" y="875" fill="#e01030">70</text>
<rect x="1229.500" y="854.500" width="28" height="12" fill="#fff" stroke="#000"/><text x="1230" y="865" fill="#111" textLength="26">79,04</text>
<rect x="1229.500" y="883.500" width="13" height="14" fill="#fff" stroke="#000"/><text x="1230" y="895" fill="#ff2020">30</text>
<rect x="1229.500" y="925.500" width="13" height="8" fill="#fff" stroke="#000"/>
<rect x="1229.500" y="916.500" width="36" height="12" fill="#fff" stroke="#000"/><text x="1230" y="927" fill="#111" textLength="33">97,136</text>
<rect x="1229.500" y="947.500" width="13" height="14" fill="#fff" stroke="#000"/><text x="1230" y="959" fill="#2020e0">20</text>
</g>

<!-- bottom ticks and labels -->
<path fill="none" stroke="#000" d="M21.500 966v4M60.500 966v4M89.500 966v4M128.500 966v4M167.500 966v4M196.500 966v4M235.500 966v4M264.500 966v4M303.500 966v4M332.500 966v4M371.500 966v4M420.500 966v4M478.500 966v4M507.500 966v4M546.500 966v4M585.500 966v4M614.500 966v4M673.500 966v4M722.500 966v4M761.500 966v4M789.500 966v4M828.500 966v4M857.500 966v4M906.500 966v4M945.500 966v4M984.500 966v4M1023.500 966v4M1052.500 966v4M1092.500 966v4M1120.500 966v4M1159.500 966v4M1188.500 966v4"/>
<g font-size="11.500" fill="#111" text-anchor="middle">
<text x="20" y="982">14</text><text x="59" y="982">19</text><text x="89" y="982">22</text><text x="127" y="982">27</text>
<text x="196" y="982">05</text><text x="235" y="982">10</text><text x="264" y="982">13</text><text x="303" y="982">18</text><text x="331" y="982">21</text><text x="371" y="982">26</text>
<text x="478" y="982">08</text><text x="507" y="982">11</text><text x="546" y="982">16</text><text x="585" y="982">21</text><text x="614" y="982">24</text>
<text x="721" y="982">07</text><text x="760" y="982">12</text><text x="789" y="982">15</text><text x="828" y="982">20</text><text x="857" y="982">23</text>
<text x="945" y="982">06</text><text x="984" y="982">11</text><text x="1023" y="982">16</text><text x="1052" y="982">19</text><text x="1091" y="982">24</text><text x="1120" y="982">27</text><text x="1188" y="982">06</text>
<g font-weight="bold" font-size="12"><text x="166" y="982">Okt</text><text x="420" y="982">Nov</text><text x="673" y="982">Dez</text><text x="906" y="982">2012</text><text x="1158" y="982">Feb</text></g>
</g>

<!-- status bar -->
<rect x="0" y="986" width="1268" height="27" fill="#f1f1f1"/>
<path d="M0 986.500H1268" stroke="#b4b4b4" stroke-width="1.500"/>
<rect x="2" y="998" width="16" height="10" fill="#fff" stroke="#111" stroke-width="1.500"/><path d="M2 998l8 6 8-6M2 1008l6-5M18 1008l-6-5" fill="none" stroke="#111"/>
<rect x="33" y="995" width="9" height="5" fill="#fff" stroke="#111"/><rect x="30" y="1000" width="16" height="7" rx="2" fill="#bbb" stroke="#111"/><rect x="33" y="1005" width="10" height="4" fill="#fff" stroke="#111"/>
<rect x="62" y="994" width="7" height="8" rx="3.500" fill="none" stroke="#111" stroke-width="1.800"/><rect x="62" y="1004" width="7" height="8" rx="3.500" fill="none" stroke="#111" stroke-width="1.800"/><path d="M65.500 997v3M65.500 1005v4" stroke="#111"/>
<rect x="89" y="995" width="12" height="15" fill="#fff" stroke="#111" stroke-width="1.200"/><path d="M91 999h8M91 1002h5M93 1005h6" stroke="#111"/><path d="M95 995h6v4z" fill="#e06060"/><path d="M89 1010l4-4 3 4z" fill="#20b020"/>
<rect x="110.500" y="994.500" width="14" height="16" rx="3" fill="#fff" stroke="#c4c4c4" stroke-width="1.500"/><path d="M120 999l-5 3.500 5 3.500z" fill="#111"/>
<rect x="124.500" y="994.500" width="992" height="16" fill="#f4f4f4" stroke="#c8c8c8" stroke-width="1.200"/>
<rect x="1116.500" y="994.500" width="23" height="16" rx="4" fill="#f8f8f8" stroke="#c8c8c8" stroke-width="1.500"/><path d="M1122 999.500h11M1122 1002.500h11M1122 1005.500h11" stroke="#b0b0b0"/>
<rect x="1141.500" y="994.500" width="14" height="16" rx="3" fill="#fff" stroke="#c4c4c4" stroke-width="1.500"/><path d="M1146 999l5 3.500-5 3.500z" fill="#111"/>
<path d="M1167 996v14" stroke="#111"/><rect x="1164" y="1000" width="5" height="9" fill="#e06060" stroke="#111" stroke-width=".7"/><path d="M1176 993v16" stroke="#111"/><rect x="1173" y="994" width="5" height="16" fill="#30b030" stroke="#111" stroke-width=".7"/>
<path d="M1175 997a3 3 0 0 0-3 4l-6 6 2 2 6-6a3 3 0 0 0 4-3l-2 2-2-1 0-2z" fill="#fff" stroke="#444" stroke-width=".8"/>
<circle cx="1198" cy="1001" r="6.500" fill="#d8d8d8" stroke="#222" stroke-width="1.500"/><path d="M1203 1006l6 6" stroke="#111" stroke-width="3"/><path d="M1206 994v10M1204 996l2-3 2 3M1204 1002l2 3 2-3M1191 1009h9M1193 1007l-3 2 3 2M1198 1007l3 2-3 2" fill="none" stroke="#1010e0" stroke-width="1.200"/>
<circle cx="1224" cy="1001" r="6" fill="#fff" stroke="#222" stroke-width="1.500"/><path d="M1221 1001h6" stroke="#1010e0" stroke-width="1.500"/><path d="M1228 1006l7 6" stroke="#111" stroke-width="3"/>
<circle cx="1252" cy="1001" r="6" fill="#fff" stroke="#222" stroke-width="1.500"/><path d="M1249 1001h6M1252 998v6" stroke="#1010e0" stroke-width="1.500"/><path d="M1256 1006l7 6" stroke="#111" stroke-width="3"/>
</svg>
</body>
</html>
